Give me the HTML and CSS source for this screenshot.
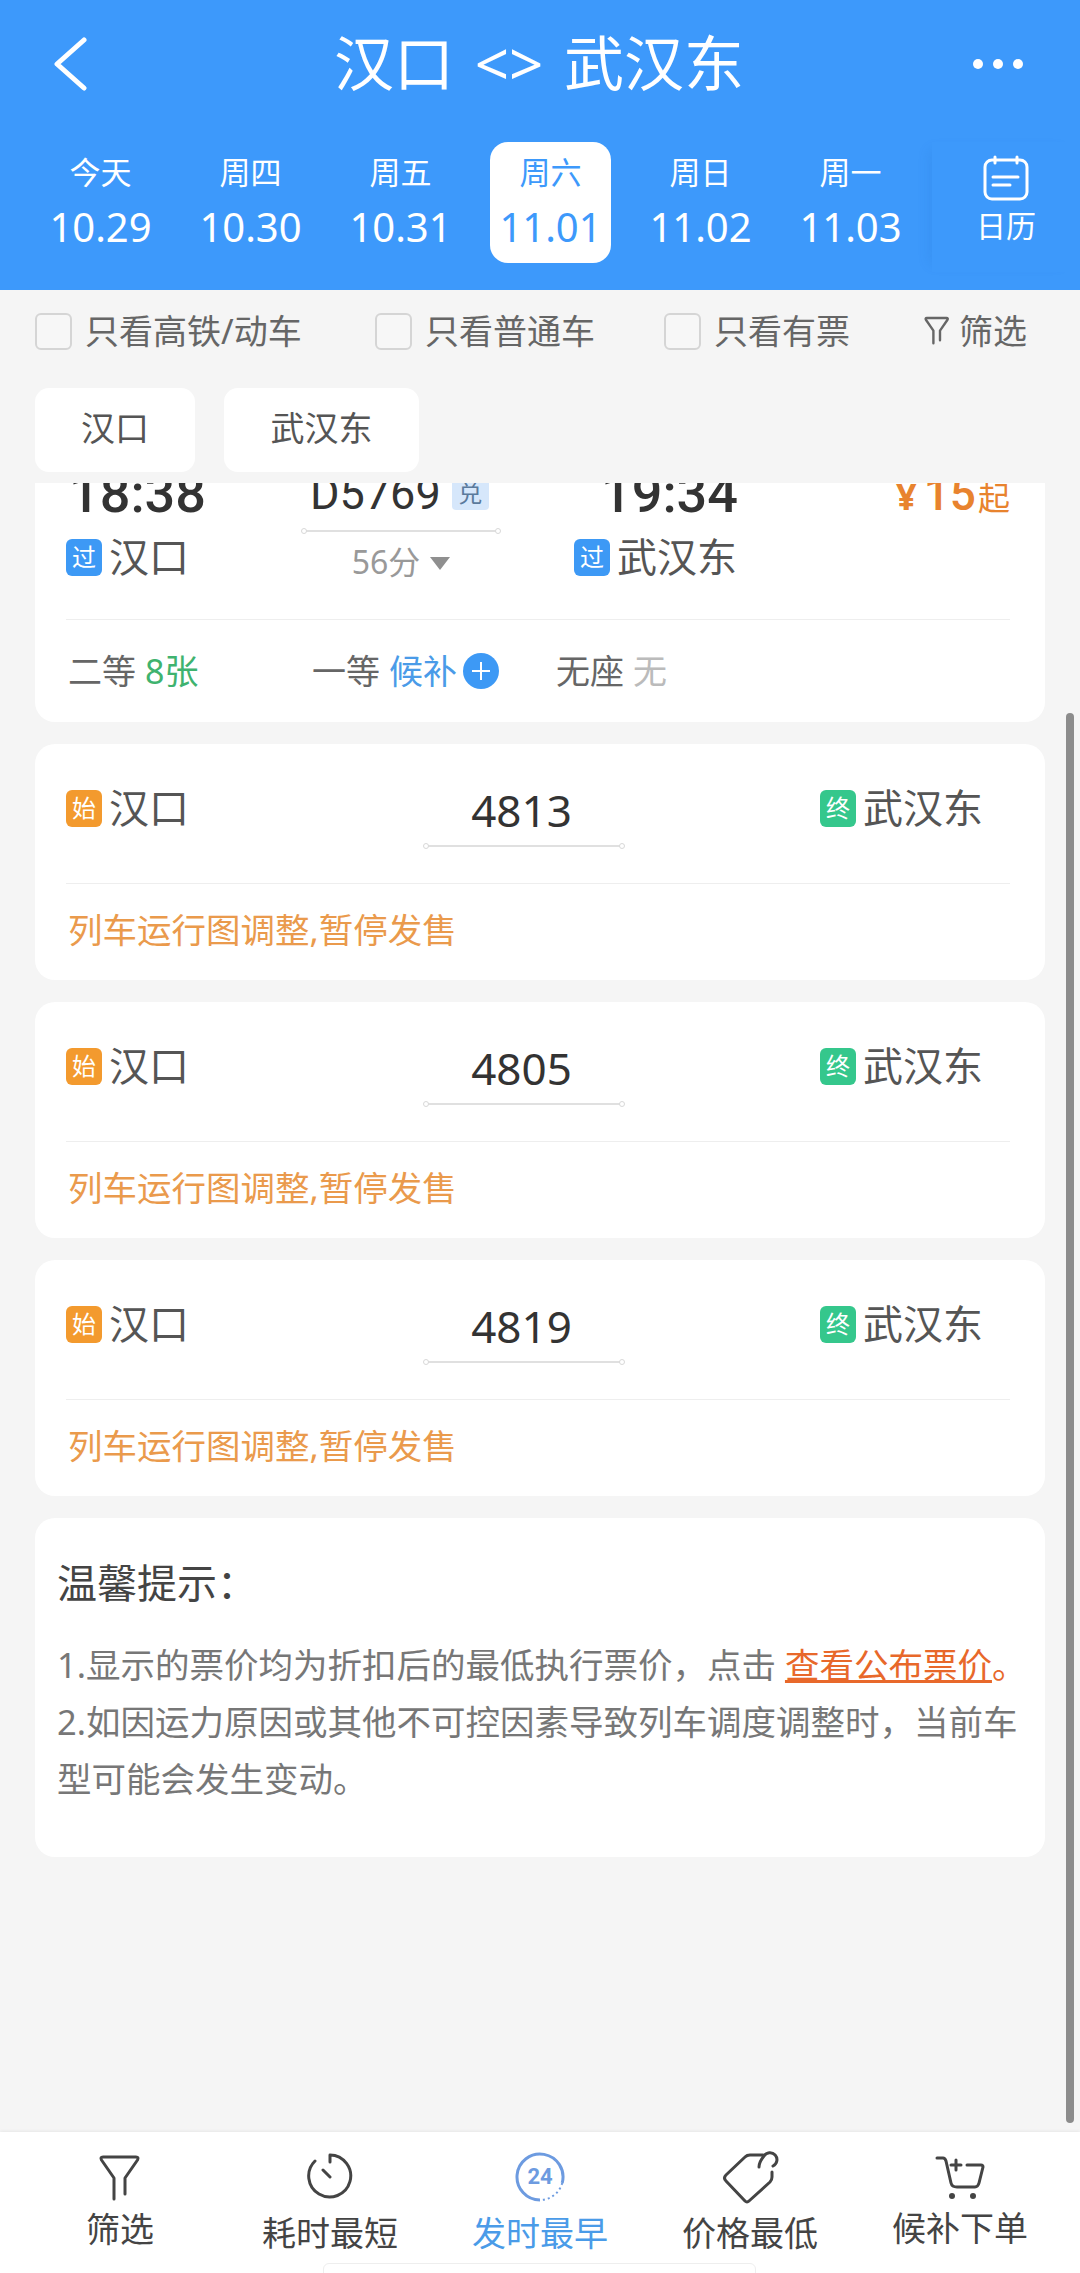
FILE: index.html
```html
<!DOCTYPE html>
<html lang="zh-CN">
<head>
    <meta charset="UTF-8">
    <meta name="viewport" content="width=device-width, initial-scale=1.0">
    <title>汉口 - 武汉东</title>
    <link rel="stylesheet" href="styles.css">
</head>
<body>
<div class="page">

    <div class="header">
        <div class="topbar">
            <svg class="back-icon" width="36" height="54" viewBox="0 0 36 54"><path d="M31 3 L4 27 L31 51"/></svg>
            <div class="title">汉口 &lt;&gt; 武汉东</div>
            <svg class="more-icon" width="54" height="12" viewBox="0 0 54 12"><circle cx="7" cy="6" r="5"/><circle cx="27" cy="6" r="5"/><circle cx="47" cy="6" r="5"/></svg>
        </div>
        <div class="dates">
            <div class="date-item"><span class="weekday">今天</span><span class="date">10.29</span></div>
            <div class="date-item"><span class="weekday">周四</span><span class="date">10.30</span></div>
            <div class="date-item"><span class="weekday">周五</span><span class="date">10.31</span></div>
            <div class="date-item active"><span class="weekday">周六</span><span class="date">11.01</span></div>
            <div class="date-item"><span class="weekday">周日</span><span class="date">11.02</span></div>
            <div class="date-item"><span class="weekday">周一</span><span class="date">11.03</span></div>
            <div class="calendar">
                <svg class="calendar-icon" width="48" height="46" viewBox="0 0 48 46"><rect x="3" y="5" width="42" height="39" rx="7"/><path d="M13 2V8M35 2V8M11 22H36M11 30H28"/></svg>
                <span>日历</span>
            </div>
        </div>
    </div>

    <div class="filters">
        <label class="check"><span class="box"></span>只看高铁/动车</label>
        <label class="check"><span class="box"></span>只看普通车</label>
        <label class="check"><span class="box"></span>只看有票</label>
        <div class="filter-link">
            <svg class="line-icon small-funnel" width="28" height="30" viewBox="0 0 44 50"><path d="M16 47V26L3.500 8Q2 5 5 5H38Q41 5 39.500 8L27 26V42"/></svg>
            筛选
        </div>
    </div>

    <div class="tags">
        <div class="tag tag-from">汉口</div>
        <div class="tag tag-to">武汉东</div>
    </div>

    <div class="list">
        <div class="card first-card">
            <div class="route">
                <div class="stop">
                    <div class="time">18:38</div>
                    <div class="station"><span class="badge blue">过</span>汉口</div>
                </div>
                <div class="train">
                    <div class="train-no">D5769<span class="duihuan">兑</span></div>
                    <div class="track"></div>
                    <div class="duration">56分<span class="arrow"></span></div>
                </div>
                <div class="stop">
                    <div class="time">19:34</div>
                    <div class="station"><span class="badge blue">过</span>武汉东</div>
                </div>
                <div class="price"><span class="yen">¥</span><span class="amount">15</span><span class="qi">起</span></div>
            </div>
            <div class="seats">
                <div class="seat seat-second">二等 <span class="green">8张</span></div>
                <div class="seat seat-first">一等 <span class="blue-text">候补</span><span class="plus"></span></div>
                <div class="seat">无座 <span class="grey">无</span></div>
            </div>
        </div>

        <div class="card">
            <div class="plain-route">
                <div class="station"><span class="badge orange">始</span>汉口</div>
                <div class="plain-train">
                    <div class="plain-no">4813</div>
                    <div class="track"></div>
                </div>
                <div class="station"><span class="badge teal">终</span>武汉东</div>
            </div>
            <div class="notice">列车运行图调整,暂停发售</div>
        </div>

        <div class="card">
            <div class="plain-route">
                <div class="station"><span class="badge orange">始</span>汉口</div>
                <div class="plain-train">
                    <div class="plain-no">4805</div>
                    <div class="track"></div>
                </div>
                <div class="station"><span class="badge teal">终</span>武汉东</div>
            </div>
            <div class="notice">列车运行图调整,暂停发售</div>
        </div>

        <div class="card">
            <div class="plain-route">
                <div class="station"><span class="badge orange">始</span>汉口</div>
                <div class="plain-train">
                    <div class="plain-no">4819</div>
                    <div class="track"></div>
                </div>
                <div class="station"><span class="badge teal">终</span>武汉东</div>
            </div>
            <div class="notice">列车运行图调整,暂停发售</div>
        </div>

        <div class="card tips">
            <div class="tips-title">温馨提示&#65306;</div>
            <p class="tips-first">1.显示的票价均为折扣后的最低执行票价&#65292;点击 <a class="tips-link">查看公布票价</a><span class="tips-dot">。</span></p>
            <p>2.如因运力原因或其他不可控因素导致列车调度调整时&#65292;当前车型可能会发生变动。</p>
        </div>
    </div>

    <div class="scrollbar"></div>

    <div class="bottom-bar">
        <div class="tab">
            <svg class="line-icon" width="44" height="50" viewBox="0 0 44 50"><path d="M16 47V26L3.500 8Q2 5 5 5H38Q41 5 39.500 8L27 26V42"/></svg>
            <span class="tab-label">筛选</span>
        </div>
        <div class="tab">
            <svg class="line-icon" width="48" height="50" viewBox="0 0 48 50"><path d="M9 9A21 21 0 1 0 24 3V10M17 18L24 25"/></svg>
            <span class="tab-label lower">耗时最短</span>
        </div>
        <div class="tab current">
            <svg class="early-icon" width="52" height="52" viewBox="0 0 52 52">
                <path d="M26 49A23 23 0 1 1 48.200 32"/>
                <path class="dashes" d="M48.200 32A23 23 0 0 1 26 49"/>
                <text x="26" y="33" text-anchor="middle">24</text>
            </svg>
            <span class="tab-label lower">发时最早</span>
        </div>
        <div class="tab">
            <svg class="line-icon" width="60" height="60" viewBox="0 0 60 60"><path d="M52 25V30Q52 33 50 35L29 54Q27 56 25 54L6 34Q3 31 6 28L25 10Q27 8 30 8H43M39 20Q39 15 44 9A7 7 0 1 1 53 19"/></svg>
            <span class="tab-label lower">价格最低</span>
        </div>
        <div class="tab">
            <svg class="line-icon" width="52" height="50" viewBox="0 0 52 50">
                <path d="M3 6H9Q11 6 12 9L17 31Q18 35 23 35H41Q44 35 45 31L49 15Q49 13 47 13H33M22 8V18M17 13H27"/>
                <circle class="wheel" cx="18" cy="44" r="3"/><circle class="wheel" cx="39" cy="44" r="3"/>
            </svg>
            <span class="tab-label upper">候补下单</span>
        </div>
    </div>

    <div class="home-bar"></div>
</div>
</body>
</html>
```

FILE: styles.css
```css
body {
    margin: 0;
    font-family: "Noto Sans", "Noto Sans CJK SC", sans-serif;
    color: #444;
    background: #f5f5f5;
}
.page {
    position: relative;
    display: flex;
    flex-direction: column;
    width: 1080px;
    height: 2273px;
    overflow: hidden;
    background: #f5f5f5;
}

/* header */
.header {
    height: 290px;
    flex: none;
    background: #3d99fb;
    color: white;
}
.topbar {
    display: grid;
    grid-template-columns: 1fr auto 1fr;
    align-items: center;
    height: 128px;
    padding: 0 55px 0 53px;
}
.back-icon path {
    fill: none;
    stroke: white;
    stroke-width: 5;
    stroke-linecap: round;
    stroke-linejoin: round;
}
.more-icon {
    justify-self: end;
    fill: white;
}
.title {
    margin-top: -2px;
    font-size: 60px;
    line-height: 70px;
    word-spacing: 5px;
}
.dates {
    display: flex;
    gap: 29px;
    margin-top: 14px;
    padding-left: 40px;
}
.date-item {
    display: flex;
    flex-direction: column;
    align-items: center;
    width: 121px;
    height: 121px;
    border-radius: 18px;
    flex: none;
}
.date-item.active {
    background: white;
    color: #3d99fb;
}
.weekday {
    margin-top: 10px;
    font-size: 31px;
    line-height: 40px;
}
.date {
    margin-top: 10px;
    font-size: 40px;
    line-height: 50px;
}
.calendar {
    display: flex;
    flex-direction: column;
    align-items: center;
    width: 148px;
    height: 130px;
    margin-left: -8px;
    padding-top: 13px;
    box-sizing: border-box;
    font-size: 30px;
    line-height: 40px;
    box-shadow: -10px 0 12px -8px rgba(30, 100, 190, 0.14);
}
.calendar-icon {
    margin-bottom: 5px;
    fill: none;
    stroke: white;
    stroke-width: 3;
    stroke-linecap: round;
}

/* filter row */
.filters {
    display: grid;
    grid-template-columns: 340px 289px 259px auto;
    align-items: center;
    height: 78px;
    padding-left: 35px;
    font-size: 34px;
    color: #666;
    flex: none;
}
.check {
    display: flex;
    align-items: center;
    gap: 13px;
}
.box {
    width: 33px;
    height: 33px;
    margin-top: 4px;
    border: 2px solid #d5d5d5;
    border-radius: 6px;
    background: #f7f7f7;
}
.filter-link {
    display: flex;
    align-items: center;
    gap: 8px;
}
.small-funnel {
    margin-top: 2px;
}
.line-icon path {
    fill: none;
    stroke: #444;
    stroke-width: 3;
    stroke-linecap: round;
    stroke-linejoin: round;
}
.small-funnel path {
    stroke: #666;
    stroke-width: 4;
}
.tags {
    display: flex;
    gap: 29px;
    margin-top: 20px;
    padding-left: 35px;
    flex: none;
}
.tag {
    height: 84px;
    border-radius: 14px;
    background: white;
    font-size: 34px;
    line-height: 81px;
    text-align: center;
    color: #555;
}
.tag-from {
    width: 160px;
}
.tag-to {
    width: 195px;
}

/* list */
.list {
    flex: 1;
    display: flex;
    flex-direction: column;
    gap: 22px;
    margin-top: 11px;
    padding: 0 35px;
    overflow: hidden;
}
.card {
    flex: none;
    padding: 39px 35px 0 31px;
    height: 236px;
    box-sizing: border-box;
    border-radius: 20px;
    background: white;
}
.first-card {
    height: 301px;
    margin-top: -62px;
    padding-top: 43px;
}
.route {
    display: grid;
    grid-template-columns: 236px 272px 1fr auto;
    height: 155px;
    border-bottom: 1px solid #eee;
}
.stop .time {
    padding-left: 3px;
    font-family: Roboto, sans-serif;
    font-size: 54px;
    font-weight: 500;
    line-height: 60px;
    color: #333;
}
.stop + .train + .stop .time {
    padding-left: 27px;
}
.stop .station {
    margin-top: 8px;
}
.station {
    display: flex;
    align-items: center;
    height: 50px;
    padding-bottom: 4px;
    box-sizing: border-box;
    font-size: 40px;
    color: #555;
}
.badge {
    width: 36px;
    height: 37px;
    margin: 4px 7px 0 0;
    border-radius: 6px;
    font-size: 24px;
    line-height: 36px;
    text-align: center;
    color: white;
}
.blue {
    background: #3d99f5;
}
.orange {
    background: #f39a2e;
}
.teal {
    background: #35c78c;
}
.train {
    width: 198px;
}
.train-no {
    display: flex;
    align-items: flex-end;
    padding-left: 8px;
    font-family: Roboto, sans-serif;
    font-size: 45px;
    line-height: 60px;
    color: #333;
}
.duihuan {
    width: 37px;
    height: 36px;
    margin: 0 0 14px 11px;
    border-radius: 4px;
    background: #d6e7fb;
    font-family: "Noto Sans CJK SC", sans-serif;
    font-size: 24px;
    line-height: 36px;
    text-align: center;
    color: #5b7a9c;
}
.track {
    position: relative;
    height: 2px;
    margin-top: 6px;
    background: #e0e0e0;
}
.track::before,
.track::after {
    content: "";
    position: absolute;
    top: -2px;
    width: 6px;
    height: 6px;
    border: 1px solid #d8d8d8;
    border-radius: 50%;
    background: white;
    box-sizing: border-box;
}
.track::before {
    left: -1px;
}
.track::after {
    right: -1px;
}
.duration {
    display: flex;
    align-items: center;
    justify-content: center;
    gap: 10px;
    margin-top: 10px;
    font-size: 32px;
    line-height: 40px;
    color: #999;
}
.arrow {
    width: 0;
    height: 0;
    margin-top: 2px;
    border-left: 10px solid transparent;
    border-right: 10px solid transparent;
    border-top: 13px solid #8f8f8f;
}
.price {
    display: flex;
    align-items: baseline;
    height: 60px;
    color: #e8832e;
    line-height: 60px;
}
.yen {
    margin-right: 7px;
    font-size: 36px;
    font-weight: 700;
}
.amount {
    font-family: Roboto, sans-serif;
    font-size: 46px;
    font-weight: 500;
}
.qi {
    margin-left: 2px;
    font-size: 32px;
}
.seats {
    display: flex;
    align-items: center;
    height: 103px;
    padding-bottom: 4px;
    box-sizing: border-box;
    font-size: 34px;
    color: #666;
}
.seat {
    display: flex;
    align-items: center;
    gap: 9px;
    padding-left: 2px;
}
.seat-second {
    width: 242px;
}
.seat-first {
    width: 242px;
}
.green {
    color: #3fb36f;
}
.blue-text {
    color: #4a9be8;
}
.grey {
    color: #bbb;
}
.plus {
    position: relative;
    width: 36px;
    height: 36px;
    margin: 3px 0 0 -3px;
    border-radius: 50%;
    background: #3d99f5;
}
.plus::before,
.plus::after {
    content: "";
    position: absolute;
    background: white;
}
.plus::before {
    left: 9px;
    top: 17px;
    width: 18px;
    height: 2px;
}
.plus::after {
    left: 17px;
    top: 9px;
    width: 2px;
    height: 18px;
}
.plain-route {
    display: grid;
    grid-template-columns: 358px 200px 196px auto;
    height: 100px;
    border-bottom: 1px solid #eee;
}
.plain-route .station:last-child {
    grid-column: 3 / 5;
    padding-left: 196px;
}
.plain-no {
    padding: 2px 5px 0 0;
    font-size: 44px;
    line-height: 50px;
    text-align: center;
    color: #333;
}
.plain-train .track {
    margin-top: 10px;
}
.notice {
    padding-left: 2px;
    font-size: 34.500px;
    line-height: 92px;
    color: #ea9a4c;
}
.tips {
    height: 339px;
    padding: 40px 22px 0 22px;
}
.tips-title {
    font-size: 40px;
    line-height: 50px;
    color: #444;
}
.tips p {
    margin: 0;
    font-size: 34.500px;
    line-height: 57px;
    color: #777;
}
.tips-title + p {
    margin-top: 28px;
}
.tips-first {
    white-space: nowrap;
}
.tips-link {
    color: #e8682a;
    text-decoration: underline;
}
.tips-dot {
    color: #e8682a;
}
.scrollbar {
    position: absolute;
    left: 1066px;
    top: 713px;
    width: 8px;
    height: 1410px;
    border-radius: 4px;
    background: #8c8c8c;
}

/* bottom tabs */
.bottom-bar {
    display: grid;
    grid-template-columns: repeat(5, 210px);
    height: 141px;
    padding-left: 15px;
    background: white;
    box-shadow: 0 -1px 3px rgba(0, 0, 0, 0.06);
    flex: none;
}
.tab {
    display: flex;
    flex-direction: column;
    align-items: center;
    font-size: 34px;
    color: #444;
}
.tab svg {
    display: block;
    height: 60px;
    margin-top: 15px;
}
.tab-label {
    line-height: 44px;
}
.tab-label.lower {
    margin-top: 4px;
}
.tab-label.upper {
    margin-top: -1px;
}
.tab.current {
    color: #4a9be8;
}
.early-icon path {
    fill: none;
    stroke: #6d9be0;
    stroke-width: 3;
}
.early-icon .dashes {
    stroke-width: 2;
    stroke-dasharray: 2 3;
}
.early-icon text {
    font-family: Roboto, sans-serif;
    font-size: 22px;
    font-weight: 700;
    fill: #6d9be0;
}
.wheel {
    fill: #444;
}
.home-bar {
    position: absolute;
    left: 323px;
    top: 2263px;
    width: 433px;
    height: 12px;
    border: 1px solid #eee;
    border-radius: 6px 6px 0 0;
    background: white;
    box-sizing: border-box;
}
```
